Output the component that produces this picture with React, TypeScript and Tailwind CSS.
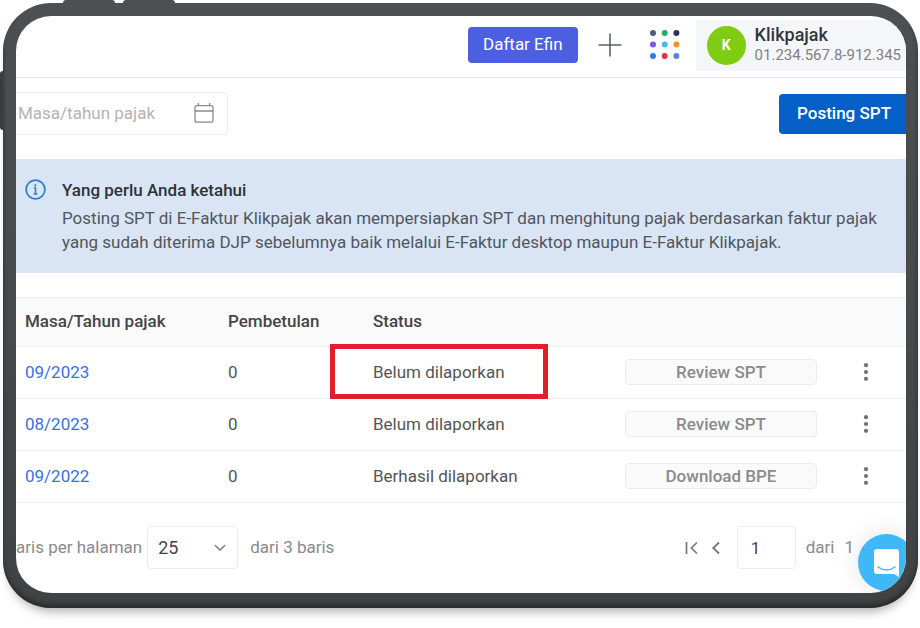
import React from "react";

const rows = [
  { period: "09/2023", revision: "0", status: "Belum dilaporkan", action: "Review SPT", highlighted: true },
  { period: "08/2023", revision: "0", status: "Belum dilaporkan", action: "Review SPT", highlighted: false },
  { period: "09/2022", revision: "0", status: "Berhasil dilaporkan", action: "Download BPE", highlighted: false },
];

const appDots = [
  "#4b6075", "#17b26a", "#2b2f6b",
  "#8455e6", "#3fc0dc", "#f0941f",
  "#2a7de1", "#e0363c", "#4f86d9",
];

function AppsIcon() {
  return (
    <svg width="30" height="30" viewBox="0 0 30 30" aria-hidden="true">
      {appDots.map((color, i) => (
        <circle key={i} cx={3 + (i % 3) * 11.7} cy={3 + Math.floor(i / 3) * 11.5} r="3" fill={color} />
      ))}
    </svg>
  );
}

function CalendarIcon() {
  return (
    <svg width="22" height="22" viewBox="0 0 22 22" fill="none" stroke="#8a8a8a" strokeWidth="1.3" aria-hidden="true">
      <rect x="2" y="2.700" width="18" height="16.500" rx="1.8" />
      <path d="M2 8h18M5.400 0v2.700M16.600 0v2.700" />
    </svg>
  );
}

function InfoIcon() {
  return (
    <svg className="mt-px shrink-0" width="21" height="21" viewBox="0 0 21 21" fill="none" stroke="#2a7dc9" aria-hidden="true">
      <circle cx="10.5" cy="10.5" r="9.4" strokeWidth="1.7" />
      <path d="M8.8 9h1.700v6M8.6 15h3.800" strokeWidth="1.5" />
      <circle cx="10.3" cy="6.3" r="1.1" fill="#2a7dc9" stroke="none" />
    </svg>
  );
}

function Header() {
  return (
    <header className="flex h-[62px] items-center justify-end border-b border-[#e3e7e9] pb-[3px]">
      <button className="h-9 rounded bg-[#4b5fe0] px-[15px] text-[17px] text-white">Daftar Efin</button>
      <button aria-label="Tambah" className="ml-5">
        <svg width="24" height="24" viewBox="0 0 24 24" stroke="#5c6166" strokeWidth="1.6" aria-hidden="true">
          <path d="M0.500 12h23M12 0.500v23" />
        </svg>
      </button>
      <button aria-label="Aplikasi" className="ml-7">
        <AppsIcon />
      </button>
      <div className="ml-4 flex h-[51px] items-center gap-[9px] bg-[#f5f6fa] pr-[5px] pl-[11px]">
        <div className="flex size-[39px] items-center justify-center rounded-full bg-[#7fcc12] text-sm font-bold text-white">K</div>
        <div>
          <div className="text-lg leading-5 font-medium text-[#333639]">Klikpajak</div>
          <div className="text-[15px] leading-5 text-[#7d8085]">01.234.567.8-912.345</div>
        </div>
      </div>
    </header>
  );
}

function Toolbar() {
  return (
    <div className="flex items-center justify-between pt-[14px] pb-6">
      <label className="flex h-[43px] w-[212px] items-center rounded-r border-y border-r border-[#ebecef] pr-3 pl-[2px]">
        <input
          aria-label="Masa/tahun pajak"
          placeholder="Masa/tahun pajak"
          className="min-w-0 flex-1 bg-transparent text-[17px] outline-none placeholder:text-[#b3b3b3]"
        />
        <CalendarIcon />
      </label>
      <button className="h-10 rounded-l bg-[#0460c6] pr-[15px] pl-[18px] text-[17px] font-medium text-white">Posting SPT</button>
    </div>
  );
}

function Notice() {
  return (
    <section className="flex gap-4 bg-[#d9e5f4] py-[19px] pr-5 pl-[9px]">
      <InfoIcon />
      <div className="text-[17px] leading-6 text-[#50565e]">
        <h2 className="mb-1 font-medium text-[#2f3338]">Yang perlu Anda ketahui</h2>
        <p>
          Posting SPT di E-Faktur Klikpajak akan mempersiapkan SPT dan menghitung pajak berdasarkan faktur pajak
          yang sudah diterima DJP sebelumnya baik melalui E-Faktur desktop maupun E-Faktur Klikpajak.
        </p>
      </div>
    </section>
  );
}

function ReportTable() {
  return (
    <table className="mt-6 w-full table-fixed border-collapse text-left text-[17px]">
      <thead>
        <tr className="h-[49px] border-y border-[#ececee] bg-[#fafafa] text-[#454545]">
          <th className="w-[203px] pl-[9px] font-medium">Masa/Tahun pajak</th>
          <th className="w-[145px] pl-[9px] font-medium">Pembetulan</th>
          <th className="pl-[9px] font-medium">Status</th>
          <th className="w-[210px]" />
          <th className="w-[80px]" />
        </tr>
      </thead>
      <tbody>
        {rows.map((row) => (
          <tr key={row.period} className="h-[52px] border-b border-[#ececee] text-[#555]">
            <td className="pl-[9px]">
              <a href="#" className="text-[#3b6fe0]">{row.period}</a>
            </td>
            <td className="pl-[9px]">{row.revision}</td>
            <td className="relative pl-[9px]">
              {row.status}
              {row.highlighted && (
                <span className="pointer-events-none absolute -top-[3px] -bottom-[1px] -left-[34px] w-[218px] border-[5px] border-[#e01e2f]" />
              )}
            </td>
            <td className="px-[9px] pb-[2px]">
              <button className="block h-[26px] w-full rounded border border-[#ebebeb] bg-[#fafafa] leading-6 font-medium text-[#8b8b8b]">
                {row.action}
              </button>
            </td>
            <td className="pb-[2px]">
              <button aria-label="Menu" className="mx-auto block">
                <svg width="6" height="18" viewBox="0 0 6 18" fill="#6f7173" aria-hidden="true">
                  <circle cx="3" cy="2.200" r="2.100" />
                  <circle cx="3" cy="9" r="2.100" />
                  <circle cx="3" cy="15.800" r="2.100" />
                </svg>
              </button>
            </td>
          </tr>
        ))}
      </tbody>
    </table>
  );
}

function Pagination() {
  return (
    <footer className="flex items-center justify-between pt-[23px] pr-[52px] pb-6 text-[17px] text-[#8a8a8a]">
      <div className="flex items-center">
        <label htmlFor="page-size">aris per halaman</label>
        <div className="relative mr-3 ml-[5px]">
          <select
            id="page-size"
            defaultValue="25"
            className="h-[43px] w-[91px] appearance-none rounded border border-[#ebebeb] bg-white pl-[10px] text-lg text-[#454545]"
          >
            <option>25</option>
            <option>50</option>
          </select>
          <svg className="pointer-events-none absolute top-[18px] right-3" width="12" height="8" viewBox="0 0 12 8" fill="none" stroke="#777" strokeWidth="1.500" aria-hidden="true">
            <path d="M1 1.300l5 4.700 5-4.700" />
          </svg>
        </div>
        <span>dari 3 baris</span>
      </div>
      <div className="flex items-center">
        <button aria-label="Halaman pertama">
          <svg width="14" height="14" viewBox="0 0 14 14" fill="none" stroke="#777" strokeWidth="1.700" aria-hidden="true">
            <path d="M1.500 1v12M12 1.500L6.300 7l5.700 5.500" />
          </svg>
        </button>
        <button aria-label="Halaman sebelumnya" className="ml-3">
          <svg width="10" height="14" viewBox="0 0 10 14" fill="none" stroke="#777" strokeWidth="1.900" aria-hidden="true">
            <path d="M8 1.500L2.300 7 8 12.500" />
          </svg>
        </button>
        <input
          aria-label="Halaman"
          defaultValue="1"
          className="mr-[10px] ml-4 h-[43px] w-[59px] rounded border border-[#ebebeb] pl-[13px] text-[17px] text-[#454545]"
        />
        <span>dari</span>
        <span className="ml-[10px]">1</span>
      </div>
    </footer>
  );
}

function ChatButton() {
  return (
    <button
      aria-label="Chat"
      className="absolute right-[-9px] bottom-[2px] flex size-[57px] items-center justify-center rounded-full bg-[#3fb8f8] shadow-[0_0_24px_rgba(0,0,0,0.12)]"
    >
      <svg width="27" height="30" viewBox="0 0 27 30" aria-hidden="true">
        <path d="M4 1h19q3 0 3 3v25l-5-3H4q-3 0-3-3V4q0-3 3-3z" fill="#fff" />
        <path d="M5 19q8.500 6 17 0" fill="none" stroke="#3fb8f8" strokeWidth="1.500" strokeLinecap="round" />
      </svg>
    </button>
  );
}

export default function App() {
  return (
    <div className="bg-white pt-[3px] pr-[2px] pb-5 pl-[3px] font-['Roboto',sans-serif]">
      <div className="relative rounded-[48px] bg-linear-to-b from-[#4d5053] to-[#414243] pt-[13px] pr-3 pb-[15px] pl-[13px] shadow-[inset_0_-4px_4px_#2c2c2c,0_9px_12px_-7px_rgba(0,0,0,0.4)]">
        <span className="absolute -top-[3px] left-[60px] h-[3px] w-[52px] rounded-t bg-[#4b5053]" />
        <span className="absolute -top-[3px] left-[120px] h-[3px] w-[52px] rounded-t bg-[#4b5053]" />
        <span className="absolute top-[68px] -left-[3px] h-[59px] w-[3px] rounded-l bg-[#383c40]" />
        <main className="relative overflow-hidden rounded-[35px] bg-white">
          <Header />
          <Toolbar />
          <Notice />
          <ReportTable />
          <Pagination />
          <ChatButton />
        </main>
      </div>
    </div>
  );
}
